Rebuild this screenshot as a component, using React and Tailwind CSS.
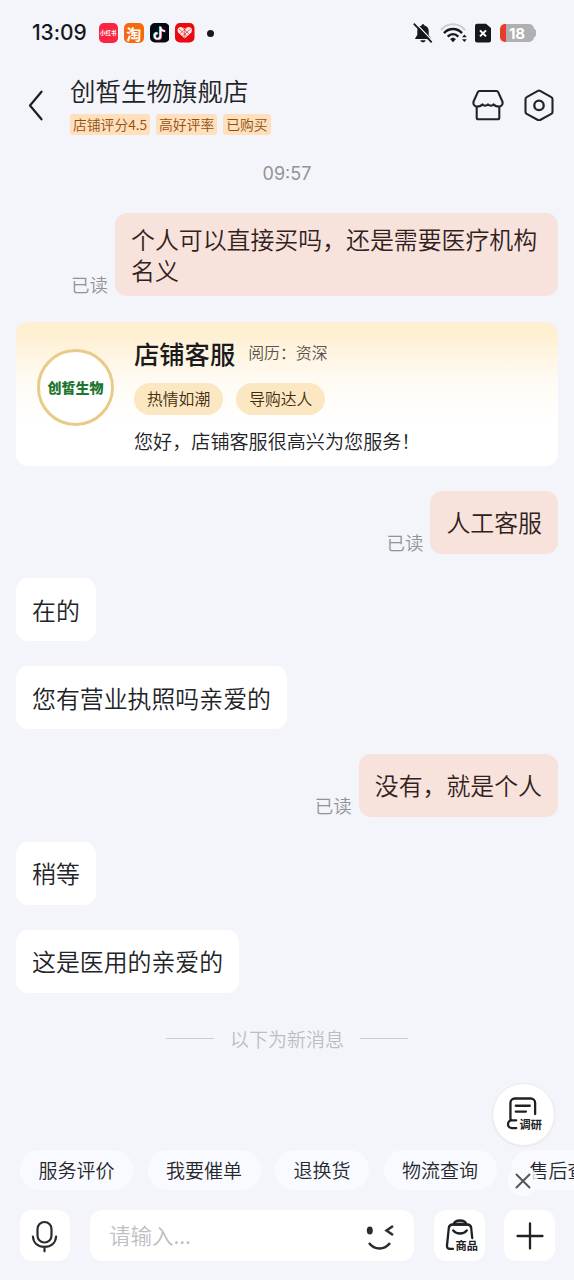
import React from 'react';
import clsx from 'clsx';

const tags = ['店铺评分4.5', '高好评率', '已购买'];
const quickActions = ['服务评价', '我要催单', '退换货', '物流查询', '售后查询'];

function AppBadges() {
  return (
    <div className="flex items-center gap-1.5 text-white">
      <span className="flex size-[19.5px] items-center justify-center rounded-[5px] bg-[#fb2442] text-[5.5px] font-bold whitespace-nowrap">
        小红书
      </span>
      <span className="flex size-[19.5px] items-center justify-center rounded-[5px] bg-[#f56a0a] text-[15px] leading-none font-bold">
        淘
      </span>
      <svg viewBox="0 0 20 20" className="size-[19.5px]" fill="none" strokeWidth="2">
        <rect width="20" height="20" rx="5" fill="#050a12" />
        <path d="M10.2 3.4v9.6a3 3 0 1 1-3-3M10.2 3.8c.3 2.7 2.2 4 4.6 4.1" stroke="#25f0ea" />
        <path d="M11.4 4.2v9.6a3 3 0 1 1-3-3M11.4 4.6c.3 2.7 2.2 4 4.600 4.100" stroke="#fe2c55" />
        <path d="M10.8 3.800v9.600a3 3 0 1 1-3-3M10.8 4.200c.3 2.700 2.200 4 4.600 4.100" stroke="#fff" strokeWidth="1.700" />
      </svg>
      <svg viewBox="0 0 20 20" className="size-[19.5px]" fill="none">
        <rect width="20" height="20" rx="5" fill="#ea0910" />
        <path d="M10 16 3.400 9.900C1.500 7 3.200 4 6 4.100c1.700 0 3.100.8 4 1.700.9-.9 2.300-1.700 4-1.700 2.800-.1 4.500 2.900 2.600 5.800Z" fill="#ffe9e6" />
        <path d="m4 6 9 8M7 4l8 8M16 6l-9 8M13 4 4.500 11.500M10 6v10" stroke="#ea0910" strokeWidth=".6" />
      </svg>
    </div>
  );
}

function StatusBar() {
  return (
    <div className="flex h-[66px] items-center pr-[38px] pl-8">
      <span className="w-[66.500px] font-['Inter'] text-[21px] font-medium tracking-[-0.1px] text-[#17181c]">13:09</span>
      <AppBadges />
      <span className="ml-3 size-[7px] rounded-full bg-[#17181c]" />
      <div className="ml-auto flex items-center">
        <svg viewBox="0 0 20 20" className="size-5" fill="#17181c">
          <path d="M10 1.200c.8 0 1.300.5 1.400 1.200 2.900.7 4.300 2.800 4.300 5.400v4.100l2.100 3.300v.9H2.200v-.9l2.100-3.300V7.800c0-2.600 1.400-4.700 4.300-5.400.1-.7.6-1.200 1.400-1.200ZM7.300 17.200h5.400c-.4 1.400-1.500 2.100-2.700 2.100s-2.300-.7-2.700-2.100Z" />
          <path d="M2.400-.2 20 18.400" stroke="#f4f5fa" strokeWidth="1.300" />
          <path d="M.8.7 18.700 19.300" stroke="#17181c" strokeWidth="1.800" />
        </svg>
        <svg viewBox="0 0 28 20" className="ml-[7px] h-5 w-7" fill="none" strokeWidth="2.200">
          <path d="M.9 7.100C7.500-.7 18.500-.7 25.100 7.100" stroke="#cccdd1" />
          <path d="M4 10.100c5-5.400 13-5.400 18 0M7.700 13.600c3.200-3.300 7.400-3.300 10.600 0" stroke="#17181c" strokeWidth="2.400" />
          <path d="m10 16 3-1.500 3 1.500-3 3.300ZM22 14.200l2.400-2.700 2.400 2.700ZM22 16.200l2.400 2.700 2.400-2.700Z" fill="#17181c" />
        </svg>
        <svg viewBox="0 0 16 20" className="ml-[7px] h-5 w-4">
          <path d="M2 .7h9L16 5v12.500a2 2 0 0 1-2 2H2a2 2 0 0 1-2-2v-15a2 2 0 0 1 2-1.800Z" fill="#17181c" />
          <path d="m5 7.400 6 6m0-6-6 6" stroke="#fff" strokeWidth="2" />
        </svg>
        <div className="ml-[9px] flex items-center">
          <div className="flex h-[18.500px] w-[34px] items-center justify-center rounded-[5px] bg-linear-to-r from-[#e83a2d] from-19% to-[#b0b0b2] to-19% font-['Inter'] text-[15px] leading-none font-bold text-white">
            18
          </div>
          <div className="h-2 w-0.5 rounded-r bg-[#b0b0b2]" />
        </div>
      </div>
    </div>
  );
}

function Header() {
  return (
    <header className="flex h-[80px] items-start pr-5 pl-7">
      <svg viewBox="0 0 16 32" className="mt-[23px] h-8 w-4" fill="none" stroke="#1d1e21" strokeWidth="2.200" strokeLinecap="round" strokeLinejoin="round">
        <path d="M13.500 2.700 2 16.500l11.500 13.800" />
      </svg>
      <div className="ml-[26px] pt-[7px]">
        <h1 className="text-[25.500px] leading-[34px] font-[350] text-[#222326]">创皙生物旗舰店</h1>
        <div className="mt-[7px] flex gap-[6px]">
          {tags.map((tag) => (
            <span key={tag} className="h-[21px] rounded-[3px] bg-[#ffdfbc] px-[3px] text-[13.800px] leading-[20px] font-[350] text-[#8f4f10]">
              {tag}
            </span>
          ))}
        </div>
      </div>
      <div className="mt-[23px] ml-auto flex gap-[19px]">
        <svg viewBox="0 0 32 32" className="size-8" fill="none" stroke="#222326" strokeWidth="2.100" strokeLinejoin="round">
          <path d="M7.500 2h17c.8 0 1.400.4 1.700 1.100l4.100 9.100c1 3-.7 5.300-3.300 5.300-2.400 0-4.200-.6-5.400-2.200-1.300 1.800-4.100 1.800-5.600 0-1.500 1.800-4.300 1.800-5.600 0-1.200 1.600-3 2.200-5.400 2.200-2.600 0-4.300-2.300-3.300-5.300l4.100-9.100C6.100 2.400 6.700 2 7.500 2Z" />
          <path d="M4.700 17.500v11.300c0 1 .5 1.500 1.500 1.500h19.600c1 0 1.500-.5 1.500-1.500V17.500" />
        </svg>
        <svg viewBox="0 0 32 32" className="-mr-px size-8" fill="none" stroke="#222326" strokeWidth="2.100" strokeLinejoin="round">
          <path d="M14.900 1.900a2.200 2.200 0 0 1 2.200 0l11.200 6.200c.8.4 1.200 1 1.200 1.900v13c0 .9-.4 1.500-1.200 1.900L17.100 31a2.200 2.200 0 0 1-2.200 0L3.700 24.900c-.8-.4-1.200-1-1.200-1.900V10c0-.9.4-1.500 1.200-1.900Z" />
          <circle cx="16" cy="16.400" r="4.700" strokeWidth="2.300" />
        </svg>
      </div>
    </header>
  );
}

function Message({ mine, children }) {
  return (
    <div className={clsx('flex items-end gap-[7px]', mine && 'justify-end')}>
      {mine && <span className="mb-px shrink-0 text-[18.500px] leading-[22px] font-[350] text-[#929397]">已读</span>}
      <div
        className={clsx(
          'flex min-h-[63px] max-w-[443px] items-center rounded-xl px-4 pt-[10px] pb-[11px] text-[23.900px] leading-[31px] font-[350]',
          mine ? 'bg-[#f7e2dc] text-[#30211d]' : 'bg-white text-[#222326]'
        )}
      >
        {children}
      </div>
    </div>
  );
}

function ServiceCard() {
  return (
    <section className="mt-px flex h-[144px] rounded-xl bg-linear-to-b from-[#ffefd2] from-8% via-[#fffbf3] via-40% to-white to-70% pl-[21px]">
      <div className="mt-[27px] flex size-[77px] shrink-0 items-center justify-center rounded-full border-3 border-[#e9cb88] bg-white text-[14px] font-black whitespace-nowrap text-[#1e7731]">
        创皙生物
      </div>
      <div className="ml-5 pt-[14px]">
        <div className="flex items-center gap-[13px]">
          <h2 className="text-[25.300px] leading-[34px] font-medium text-[#1b1b1b]">店铺客服</h2>
          <span className="text-[15.900px] font-[350] text-[#56544f]">阅历：资深</span>
        </div>
        <div className="mt-[13px] flex gap-[13px] text-[15.800px] leading-8 font-[350] text-[#3f2c0e]">
          <span className="rounded-full bg-[#fce7c3] px-[13px]">热情如潮</span>
          <span className="rounded-full bg-[#fce7c3] px-[13px]">导购达人</span>
        </div>
        <p className="mt-3 text-[19.100px] leading-7 font-[350] text-[#222326]">您好，店铺客服很高兴为您服务！</p>
      </div>
    </section>
  );
}

function SurveyButton() {
  return (
    <button className="absolute top-[1083px] left-[491.500px] size-[63px] rounded-full border border-[#eaebef] bg-white shadow-xs">
      <svg viewBox="0 0 63 63" className="size-full" fill="none" stroke="#202124" strokeWidth="2.400" strokeLinecap="round">
        <path d="M18 37V19.500a4.500 4.500 0 0 1 4.500-4.500H39a4.500 4.500 0 0 1 4.500 4.500V31M23.500 22.500H38M23.500 28.500h10.500M24 37.500h-4.500a4 4 0 0 0 0 8H24" />
      </svg>
      <span className="absolute top-[33px] left-[27px] text-[11.200px] leading-[14px] font-bold whitespace-nowrap text-[#202124]">调研</span>
    </button>
  );
}

function CloseButton() {
  return (
    <button className="absolute top-[1166px] left-[508px] flex size-[30px] items-center justify-center rounded-full bg-[#fafbfe]/80">
      <svg viewBox="0 0 16 16" className="size-4" stroke="#55565a" strokeWidth="2" strokeLinecap="round">
        <path d="m1.500 1.500 13 13m0-13-13 13" />
      </svg>
    </button>
  );
}

function QuickActions() {
  return (
    <div className="flex h-10 shrink-0 gap-[14.500px] pl-5">
      {quickActions.map((action) => (
        <button key={action} className="shrink-0 rounded-full bg-[#f9faff] px-[18.500px] text-[19px] leading-10 font-[350] text-[#26272b]">
          {action}
        </button>
      ))}
    </div>
  );
}

function InputBar() {
  return (
    <div className="mt-5 flex h-[51px] shrink-0 gap-5 pl-5">
      <button className="flex w-[50px] items-center justify-center rounded-xl bg-white">
        <svg viewBox="0 0 28 34" className="h-[34px] w-7" fill="none" stroke="#2b2c2f" strokeWidth="2.200" strokeLinecap="round">
          <rect x="6.500" y="3" width="14" height="20.500" rx="7" />
          <path d="M1.900 17.500c.5 6.600 5.200 10.300 11.600 10.300s11.100-3.700 11.600-10.300M13.500 28v4.300" />
        </svg>
      </button>
      <div className="flex w-[324px] items-center justify-between rounded-xl bg-white pr-[17px] pl-[19px]">
        <span className="text-[21.500px] font-[350] text-[#bdbec2]">请输入...</span>
        <svg viewBox="0 0 32 32" className="size-8" fill="none" stroke="#2b2c2f" strokeWidth="2.500">
          <ellipse cx="4.800" cy="10.500" rx="3" ry="4" fill="#2b2c2f" stroke="none" />
          <path d="m28 6-6.500 4.500 6.500 4.500M4 23c5.500 7.300 15.500 7.300 21 0" />
        </svg>
      </div>
      <button className="relative w-[51px] rounded-xl bg-white">
        <svg viewBox="0 0 51 51" className="size-[51px]" fill="none" stroke="#202124" strokeWidth="2.300" strokeLinecap="round" strokeLinejoin="round">
          <path d="M19.500 14.500c.7-2.600 3-4 6.500-4s5.800 1.400 6.500 4Z" fill="#a9aaad" />
          <path d="M19 38.800h-3c-2.300 0-3.200-1.200-3-3.500l1.800-17.300c.3-2.300 1.500-3.500 3.800-3.500h14.800c2.300 0 3.500 1.200 3.800 3.500l1 10M19.200 20.500c3.300 4 10.300 4 13.600 0" />
        </svg>
        <span className="absolute top-[28px] left-[21.500px] text-[11.200px] leading-[14px] font-bold whitespace-nowrap text-[#202124]">商品</span>
      </button>
      <button className="-ml-px flex w-[51px] items-center justify-center rounded-xl bg-white">
        <svg viewBox="0 0 28 28" className="size-7" stroke="#202124" strokeWidth="2.300" strokeLinecap="round">
          <path d="M14 1.500v25M1.500 14h25" />
        </svg>
      </button>
    </div>
  );
}

export default function App() {
  return (
    <div className="relative flex h-[1280px] w-[574px] flex-col overflow-hidden bg-[#f4f5fa] font-['Noto_Sans_CJK_SC',sans-serif]">
      <StatusBar />
      <Header />

      {/* chat history */}
      <main className="flex h-[1004px] shrink-0 flex-col px-4">
        <time className="mt-[14px] text-center font-['Inter'] text-[18px] leading-7 font-normal text-[#929397]">09:57</time>
        <div className="mt-[25px] flex flex-col gap-[24.800px]">
          <Message mine>个人可以直接买吗，还是需要医疗机构名义</Message>
          <ServiceCard />
          <Message mine>人工客服</Message>
          <Message>在的</Message>
          <Message>您有营业执照吗亲爱的</Message>
          <Message mine>没有，就是个人</Message>
          <Message>稍等</Message>
          <Message>这是医用的亲爱的</Message>
        </div>
        <div className="mt-8 flex items-center justify-center gap-4 text-[19px] leading-7 font-[350] text-[#bcbdc3]">
          <span className="h-px w-12 bg-[#cdced3]" />
          以下为新消息
          <span className="h-px w-12 bg-[#cdced3]" />
        </div>
      </main>

      <QuickActions />
      <InputBar />
      <SurveyButton />
      <CloseButton />
    </div>
  );
}
